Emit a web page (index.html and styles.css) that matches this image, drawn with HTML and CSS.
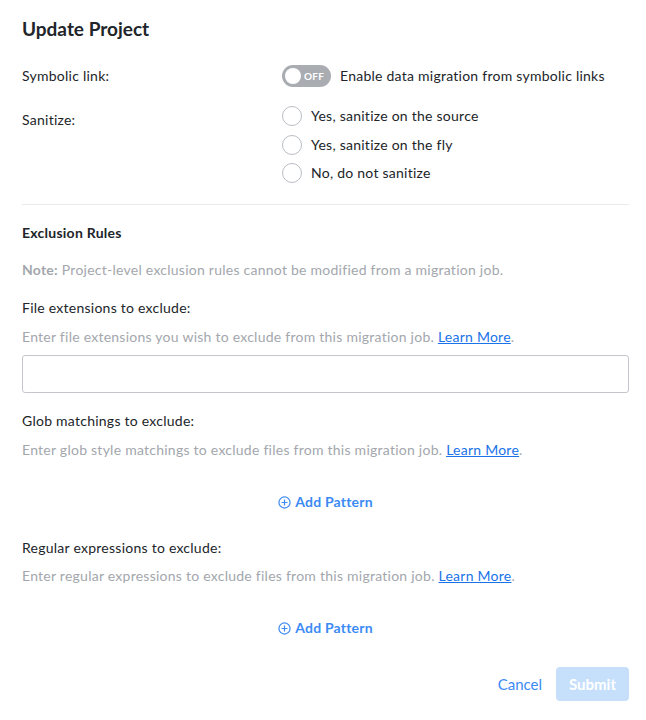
FILE: index.html
```html
<!DOCTYPE html>
<html lang="en">
<head>
<meta charset="utf-8">
<title>Update Project</title>
<link rel="stylesheet" href="styles.css">
</head>
<body>
<main class="dialog">
  <h1 class="title">Update Project</h1>

  <div class="row row-symlink">
    <div class="row-label">Symbolic link:</div>
    <div class="row-control toggle-line">
      <span class="toggle"><span class="knob"></span><span class="toggle-text">OFF</span></span>
      <span class="option-text">Enable data migration from symbolic links</span>
    </div>
  </div>

  <div class="row row-sanitize">
    <div class="row-label sanitize-label">Sanitize:</div>
    <div class="row-control radios">
      <label class="radio-line"><span class="radio"></span><span class="option-text">Yes, sanitize on the source</span></label>
      <label class="radio-line"><span class="radio"></span><span class="option-text">Yes, sanitize on the fly</span></label>
      <label class="radio-line"><span class="radio"></span><span class="option-text">No, do not sanitize</span></label>
    </div>
  </div>

  <hr class="divider">

  <h2 class="section-title">Exclusion Rules</h2>
  <p class="note"><strong>Note:</strong> Project-level exclusion rules cannot be modified from a migration job.</p>

  <section class="field">
    <div class="field-label">File extensions to exclude:</div>
    <p class="field-desc">Enter file extensions you wish to exclude from this migration job. <a class="link" href="#">Learn More</a>.</p>
    <input class="text-input" type="text">
  </section>

  <section class="field field-glob">
    <div class="field-label">Glob matchings to exclude:</div>
    <p class="field-desc">Enter glob style matchings to exclude files from this migration job. <a class="link" href="#">Learn More</a>.</p>
    <div class="add-row"><button class="add-btn" type="button"><svg class="add-icon" viewBox="0 0 14 14" width="13" height="13"><circle cx="7" cy="7" r="6" fill="none" stroke="currentColor" stroke-width="1.3"/><path d="M7 3.8v6.4M3.8 7h6.4" stroke="currentColor" stroke-width="1.3" fill="none"/></svg>Add Pattern</button></div>
  </section>

  <section class="field field-regex">
    <div class="field-label">Regular expressions to exclude:</div>
    <p class="field-desc">Enter regular expressions to exclude files from this migration job. <a class="link" href="#">Learn More</a>.</p>
    <div class="add-row"><button class="add-btn" type="button"><svg class="add-icon" viewBox="0 0 14 14" width="13" height="13"><circle cx="7" cy="7" r="6" fill="none" stroke="currentColor" stroke-width="1.3"/><path d="M7 3.8v6.4M3.8 7h6.4" stroke="currentColor" stroke-width="1.3" fill="none"/></svg>Add Pattern</button></div>
  </section>

  <footer class="actions">
    <button class="btn-cancel" type="button">Cancel</button>
    <button class="btn-submit" type="button" disabled>Submit</button>
  </footer>
</main>
</body>
</html>
```

FILE: styles.css
```css
* { box-sizing: border-box; }
html, body { margin: 0; padding: 0; background: #ffffff; }
body {
  font-family: Lato, "Open Sans", "Liberation Sans", sans-serif;
  font-size: 14px;
  letter-spacing: 0.25px;
  color: #212529;
}
.dialog {
  width: 646px;
  padding: 17px 17px 0 22px;
}
.title {
  margin: 0;
  font-size: 19px;
  line-height: 24px;
  font-weight: 700;
  letter-spacing: 0;
  color: #212529;
}
.row {
  display: flex;
}
.row-label {
  width: 260px;
  flex: none;
  line-height: 20px;
}
.row-symlink {
  margin-top: 24px;
  align-items: center;
}
.toggle-line {
  display: flex;
  align-items: center;
  gap: 9px;
}
.toggle {
  position: relative;
  display: inline-flex;
  align-items: center;
  width: 49px;
  height: 22px;
  border-radius: 11px;
  background: #a9acb1;
}
.knob {
  position: absolute;
  left: 3px;
  top: 3px;
  width: 16px;
  height: 16px;
  border-radius: 50%;
  background: #ffffff;
}
.toggle-text {
  margin-left: 22px;
  font-size: 10px;
  font-weight: 700;
  color: #ffffff;
  letter-spacing: 0.2px;
}
.option-text {
  line-height: 20px;
}
.row-sanitize {
  margin-top: 19px;
}
.sanitize-label {
  padding-top: 4px;
}
.radios {
  display: flex;
  flex-direction: column;
  gap: 8.5px;
}
.radio-line {
  display: flex;
  align-items: center;
  gap: 9px;
  height: 20px;
}
.radio {
  width: 20px;
  height: 20px;
  border-radius: 50%;
  border: 1px solid #b9bdc3;
  background: #ffffff;
  flex: none;
}
.divider {
  margin: 21px 0 0;
  border: 0;
  border-top: 1px solid #e9eaec;
}
.section-title {
  margin: 18px 0 0;
  font-size: 14px;
  line-height: 20px;
  font-weight: 700;
}
.note {
  margin: 17px 0 0;
  line-height: 20px;
  color: #a3a7ad;
}
.note strong {
  font-weight: 700;
}
.field {
  margin-top: 18px;
}
.field-label {
  line-height: 20px;
}
.field-desc {
  margin: 9px 0 0;
  line-height: 20px;
  color: #a3a7ad;
}
.link {
  color: #1a73e8;
  text-decoration: underline;
}
.text-input {
  display: block;
  margin-top: 8px;
  width: 100%;
  height: 38px;
  border: 1px solid #c3c6cb;
  border-radius: 3px;
  background: #fff;
  font: inherit;
}
.add-row {
  margin-top: 32px;
  display: flex;
  justify-content: center;
}
.add-btn {
  display: inline-flex;
  align-items: center;
  gap: 4px;
  padding: 0;
  border: 0;
  background: none;
  font: inherit;
  font-weight: 700;
  line-height: 20px;
  letter-spacing: 0.2px;
  color: #3c8af4;
}
.field-regex {
  margin-top: 26px;
}
.field-regex .field-desc {
  margin-top: 8px;
}
.actions {
  margin-top: 29px;
  display: flex;
  justify-content: flex-end;
  align-items: center;
  gap: 14px;
}
.btn-cancel {
  padding: 0;
  border: 0;
  background: none;
  font: inherit;
  font-size: 15px;
  letter-spacing: 0;
  color: #3c8af4;
}
.btn-submit {
  width: 73px;
  height: 34px;
  border: 0;
  border-radius: 4px;
  background: #c6e0fc;
  color: #ffffff;
  font: inherit;
  font-size: 15px;
  font-weight: 700;
  letter-spacing: 0;
}
```
